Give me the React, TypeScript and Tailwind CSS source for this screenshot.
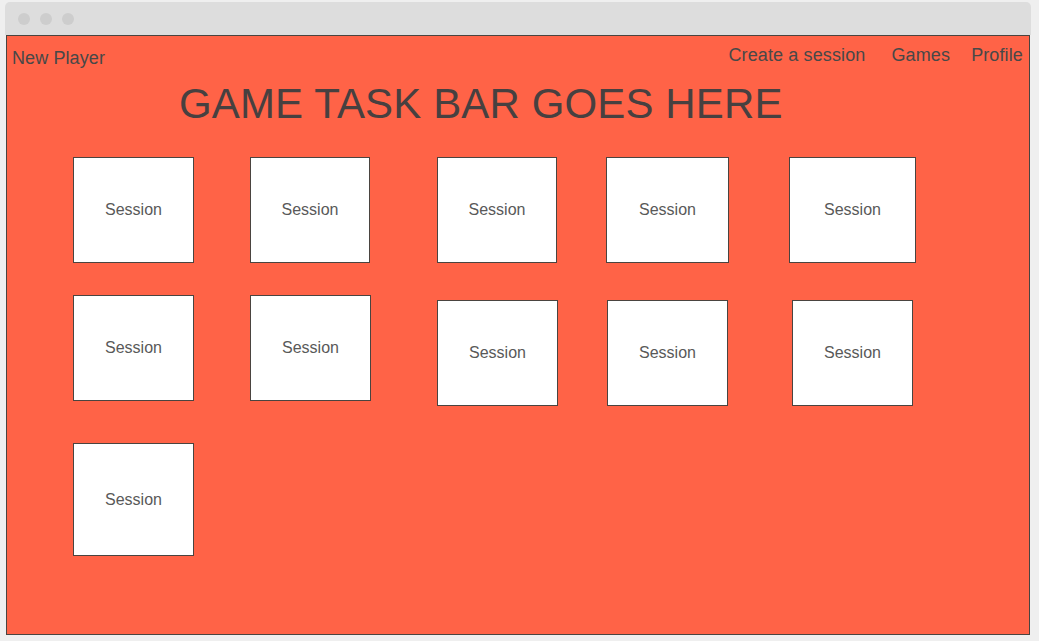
import React from "react";

type Card = { w: string; h: string; ml: string; mt?: string };

const rows: { mt: string; cards: Card[] }[] = [
  {
    mt: "mt-[29px]",
    cards: [
      { w: "w-[121px]", h: "h-[106px]", ml: "ml-[66px]" },
      { w: "w-[120px]", h: "h-[106px]", ml: "ml-[56px]" },
      { w: "w-[120px]", h: "h-[106px]", ml: "ml-[67px]" },
      { w: "w-[123px]", h: "h-[106px]", ml: "ml-[49px]" },
      { w: "w-[127px]", h: "h-[106px]", ml: "ml-[60px]" },
    ],
  },
  {
    mt: "mt-[32px]",
    cards: [
      { w: "w-[121px]", h: "h-[106px]", ml: "ml-[66px]" },
      { w: "w-[121px]", h: "h-[106px]", ml: "ml-[56px]" },
      { w: "w-[121px]", h: "h-[106px]", ml: "ml-[66px]", mt: "mt-[5px]" },
      { w: "w-[121px]", h: "h-[106px]", ml: "ml-[49px]", mt: "mt-[5px]" },
      { w: "w-[121px]", h: "h-[106px]", ml: "ml-[64px]", mt: "mt-[5px]" },
    ],
  },
  {
    mt: "mt-[37px]",
    cards: [{ w: "w-[121px]", h: "h-[113px]", ml: "ml-[66px]" }],
  },
];

function SessionCard({ card }: { card: Card }) {
  return (
    <div
      className={`${card.w} ${card.h} ${card.ml} ${card.mt ?? ""} shrink-0 bg-white border border-[#4a4440] flex items-center justify-center text-[16px] text-[#595959]`}
    >
      Session
    </div>
  );
}

export default function App() {
  return (
    <div
      className="w-[1039px] h-[641px] bg-[#efefef] pt-[2px] pl-[5px] overflow-hidden"
      style={{ fontFamily: '"Liberation Sans", Arial, sans-serif' }}
    >
      <div className="w-[1026px] flex flex-col">
        {/* window chrome */}
        <div className="h-[33px] bg-[#dddddd] rounded-t-[5px] flex items-center gap-[10px] pl-[13px]">
          <span className="w-[12px] h-[12px] rounded-full bg-[#cdcdcd]" />
          <span className="w-[12px] h-[12px] rounded-full bg-[#cdcdcd]" />
          <span className="w-[12px] h-[12px] rounded-full bg-[#cdcdcd]" />
        </div>

        {/* page body */}
        <div className="mx-[1px] w-[1024px] h-[600px] bg-[#ff6347] border border-[#4a4440] flex flex-col text-[#484848]">
          <div className="flex justify-between items-start h-[32px]">
            <div className="pt-[12px] pl-[5px] text-[18px] leading-[21px] tracking-[0.1px]">New Player</div>
            <nav className="pt-[9px] pr-[6px] flex text-[18px] leading-[21px] tracking-[0.12px]">
              <span>Create a session</span>
              <span className="ml-[26px]">Games</span>
              <span className="ml-[21px]">Profile</span>
            </nav>
          </div>

          <h1 className="mt-[12px] pl-[172px] text-[42px] leading-[48px] tracking-[0.13px] text-[#474040]">
            GAME TASK BAR GOES HERE
          </h1>

          {rows.map((row, i) => (
            <div key={i} className={`${row.mt} flex items-start`}>
              {row.cards.map((c, j) => (
                <SessionCard key={j} card={c} />
              ))}
            </div>
          ))}
        </div>
      </div>
    </div>
  );
}
